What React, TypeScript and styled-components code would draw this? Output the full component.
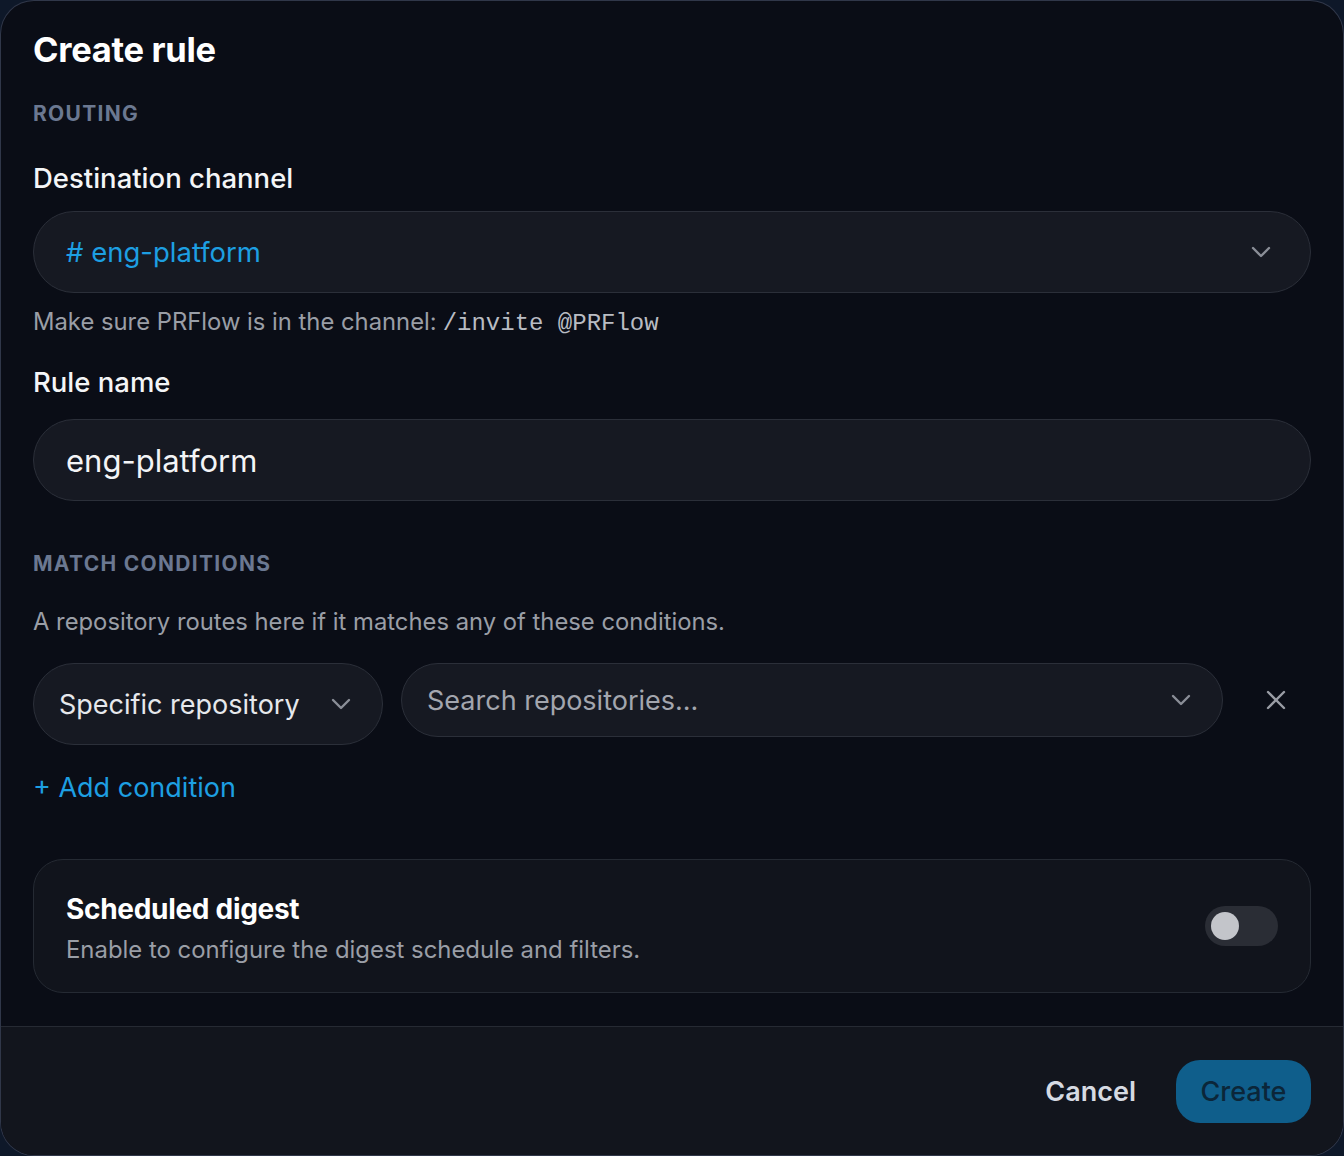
import React, { useState } from 'react';
import styled, { createGlobalStyle } from 'styled-components';

const GlobalStyle = createGlobalStyle`
  html, body {
    margin: 0;
    padding: 0;
    background: #0e1829;
  }
  body {
    font-family: Inter, "Noto Sans", "Liberation Sans", sans-serif;
    -webkit-font-smoothing: antialiased;
  }
  * {
    box-sizing: border-box;
  }
`

const Modal = styled.div`
  width: 1344px;
  height: 1156px;
  border-radius: 34px;
  border: 1px solid rgba(120, 136, 170, 0.35);
  background: #0a0d16;
  display: flex;
  flex-direction: column;
  overflow: hidden;
`

const Body = styled.div`
  flex: 1;
  padding: 29px 32px 0 32px;
  display: flex;
  flex-direction: column;
`

const Title = styled.h1`
  margin: 0;
  font-size: 34.5px;
  line-height: 40px;
  font-weight: 700;
  color: #ffffff;
  letter-spacing: -0.3px;
`

const SectionHeading = styled.div<{ top: number }>`
  margin-top: ${(p) => p.top}px;
  font-size: 21px;
  line-height: 28px;
  font-weight: 700;
  letter-spacing: 1.3px;
  text-transform: uppercase;
  color: #6b7891;
`

const Label = styled.label<{ top: number }>`
  display: block;
  margin-top: ${(p) => p.top}px;
  font-size: 27.5px;
  line-height: 34px;
  font-weight: 500;
  color: #f4f5f7;
`

const Field = styled.div<{ top?: number; h?: number }>`
  margin-top: ${(p) => p.top ?? 0}px;
  height: ${(p) => p.h ?? 82}px;
  border-radius: 999px;
  border: 1.5px solid #2b2f39;
  background: #161922;
  display: flex;
  align-items: center;
  justify-content: space-between;
  padding: 0 38px 0 32px;
`

const ChannelValue = styled.span`
  font-size: 27.5px;
  color: #1d9fe2;
`

const InputValue = styled.span`
  font-size: 31px;
  color: #f3f4f6;
`

const Help = styled.p<{ top: number }>`
  margin: ${(p) => p.top}px 0 0;
  font-size: 23.8px;
  line-height: 30px;
  color: #9a9ea6;
`

const Code = styled.code`
  font-family: "Liberation Mono", "DejaVu Sans Mono", monospace;
  font-size: 24px;
  font-weight: 400;
  color: #b9bcc3;
  margin-left: 6px;
`

const ConditionRow = styled.div`
  margin-top: 26px;
  display: flex;
  align-items: flex-start;
  gap: 18px;
`

const TypeSelect = styled(Field)`
  width: 350px;
  flex: none;
  padding: 0 30px 0 25px;
`

const SearchSelect = styled(Field)`
  flex: 1;
  padding: 0 30px 0 25px;
`

const TypeValue = styled.span`
  font-size: 27px;
  color: #e6e8ec;
`

const Placeholder = styled.span`
  font-size: 27px;
  color: #a3a6ae;
`

const RemoveButton = styled.button`
  width: 70px;
  height: 74px;
  flex: none;
  border: none;
  background: transparent;
  display: flex;
  align-items: center;
  justify-content: center;
  padding: 0;
  cursor: pointer;
`

const AddLink = styled.button`
  margin-top: 25px;
  align-self: flex-start;
  border: none;
  background: transparent;
  padding: 0;
  font-family: inherit;
  font-size: 27px;
  line-height: 36px;
  color: #1d9fe2;
  cursor: pointer;
`

const DigestCard = styled.div`
  margin-top: 53px;
  height: 134px;
  border-radius: 30px;
  border: 1.5px solid #252a33;
  background: #11141c;
  display: flex;
  align-items: center;
  justify-content: space-between;
  padding: 5px 32px 0 32px;
`

const DigestText = styled.div`
  display: flex;
  flex-direction: column;
  gap: 9px;
`

const DigestTitle = styled.div`
  font-size: 28px;
  line-height: 34px;
  font-weight: 700;
  color: #ffffff;
  letter-spacing: -0.3px;
`

const DigestSub = styled.div`
  font-size: 23.9px;
  line-height: 30px;
  color: #9a9ea6;
`

const Track = styled.button<{ on: boolean }>`
  position: relative;
  width: 73px;
  height: 40px;
  margin-top: -5px;
  border-radius: 20px;
  border: none;
  padding: 0;
  background: ${(p) => (p.on ? '#0f6a9c' : '#2a2d35')};
  cursor: pointer;
`

const Knob = styled.span<{ on: boolean }>`
  position: absolute;
  top: 6px;
  left: ${(p) => (p.on ? 39 : 6)}px;
  width: 28px;
  height: 28px;
  border-radius: 50%;
  background: #c3c5ca;
  transition: left 0.2s;
`

const Footer = styled.div`
  height: 129px;
  flex: none;
  border-top: 1.5px solid #262a33;
  background: #12151d;
  display: flex;
  align-items: center;
  justify-content: flex-end;
  gap: 40px;
  padding: 0 32px;
`

const CancelButton = styled.button`
  border: none;
  background: transparent;
  padding: 0;
  font-family: inherit;
  font-size: 27px;
  font-weight: 600;
  color: #d6dae2;
  cursor: pointer;
`

const CreateButton = styled.button`
  width: 135px;
  height: 63px;
  border: none;
  border-radius: 24px;
  background: #0f5e8b;
  font-family: inherit;
  font-size: 27px;
  font-weight: 500;
  color: #0b2639;
  cursor: pointer;
`

const Chevron = () => (
  <svg width="22" height="14" viewBox="0 0 22 14" fill="none">
    <polyline
      points="3,3 11,11 19,3"
      stroke="#8a8e97"
      strokeWidth="2.4"
      strokeLinecap="round"
      strokeLinejoin="round"
    />
  </svg>
)

const CloseIcon = () => (
  <svg width="22" height="22" viewBox="0 0 22 22" fill="none">
    <path
      d="M3 3 L19 19 M19 3 L3 19"
      stroke="#9a9da5"
      strokeWidth="2.4"
      strokeLinecap="round"
    />
  </svg>
)

export default function App() {
  const [digest, setDigest] = useState(false)

  return (
    <>
      <GlobalStyle />
      <Modal>
        <Body>
          <Title>Create rule</Title>

          <SectionHeading top={30}>Routing</SectionHeading>

          <Label top={33}>Destination channel</Label>
          <Field top={16}>
            <ChannelValue># eng-platform</ChannelValue>
            <Chevron />
          </Field>
          <Help top={14}>
            Make sure PRFlow is in the channel:<Code>/invite @PRFlow</Code>
          </Help>

          <Label top={26}>Rule name</Label>
          <Field top={20}>
            <InputValue>eng-platform</InputValue>
          </Field>

          <SectionHeading top={49}>Match conditions</SectionHeading>
          <Help top={29}>A repository routes here if it matches any of these conditions.</Help>

          <ConditionRow>
            <TypeSelect>
              <TypeValue>Specific repository</TypeValue>
              <Chevron />
            </TypeSelect>
            <SearchSelect h={74}>
              <Placeholder>Search repositories...</Placeholder>
              <Chevron />
            </SearchSelect>
            <RemoveButton aria-label="Remove condition">
              <CloseIcon />
            </RemoveButton>
          </ConditionRow>

          <AddLink>+ Add condition</AddLink>

          <DigestCard>
            <DigestText>
              <DigestTitle>Scheduled digest</DigestTitle>
              <DigestSub>Enable to configure the digest schedule and filters.</DigestSub>
            </DigestText>
            <Track on={digest} onClick={() => setDigest(!digest)} aria-label="Scheduled digest">
              <Knob on={digest} />
            </Track>
          </DigestCard>
        </Body>

        <Footer>
          <CancelButton>Cancel</CancelButton>
          <CreateButton>Create</CreateButton>
        </Footer>
      </Modal>
    </>
  )
}
